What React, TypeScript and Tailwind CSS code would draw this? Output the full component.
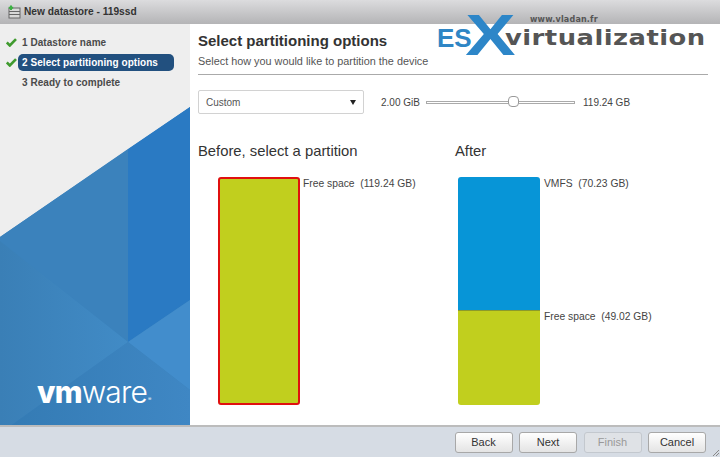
export default function App() {
  const Step = ({ n, label, checked, active }: { n: number; label: string; checked?: boolean; active?: boolean }) => (
    <div className="flex items-center h-5 pl-[6px]">
      <div className="w-[12px] shrink-0">
        {checked && (
          <svg width="11" height="9" viewBox="0 0 11 9"><path d="M0.8 4.5 L3.8 7.5 L10 1.2" fill="none" stroke="#3f9a2e" strokeWidth="2.6" /></svg>
        )}
      </div>
      <div className={`h-[17px] flex items-center rounded-[5px] w-[156px] pl-[4px] text-[10px] font-bold tracking-[0.05px] ${active ? "bg-[#22507f] text-white" : "text-[#4a4a4a]"}`}>
        {n} {label}
      </div>
    </div>
  );
  const Btn = ({ label, disabled }: { label: string; disabled?: boolean }) => (
    <button className={`w-[58px] h-[21px] rounded-[3px] border text-[11px] ${disabled ? "border-[#c3c8ce] bg-[#dfe2e6] text-[#999]" : "border-[#a8a8a8] bg-gradient-to-b from-white to-[#e4e4e4] text-[#333]"}`}>
      {label}
    </button>
  );
  return (
    <div className="relative w-[720px] h-[457px] overflow-hidden bg-white flex flex-col font-['Liberation_Sans',Arial,sans-serif]">
      <div className="h-6 shrink-0 flex items-center pl-2 gap-[2px] bg-gradient-to-b from-[#dcdcde] to-[#b4b4b6] text-[#333] text-[10.2px] font-bold">
        <svg width="14" height="14" viewBox="0 0 14 14">
          <rect x="1" y="3" width="11" height="10" fill="#d8d8d8" stroke="#666" />
          <path d="M1 6.5H12M1 9.5H12" stroke="#666" />
          <path d="M3 0.5V5M0.8 2.7H5.2" stroke="#3cb043" strokeWidth="2" />
        </svg>
        <span>New datastore - 119ssd</span>
      </div>
      <div className="flex flex-1 min-h-0">
        <aside className="relative w-[190px] shrink-0 bg-[#eeeeee] pt-[8px]">
          <Step n={1} label="Datastore name" checked />
          <Step n={2} label="Select partitioning options" checked active />
          <Step n={3} label="Ready to complete" />
          <svg className="absolute left-0 bottom-0" width="190" height="318" viewBox="0 107 190 318">
            <defs>
              <linearGradient id="a" x1="0" x2="1" y1="0" y2="0">
                <stop offset="0" stopColor="#3a7fb6" />
                <stop offset="1" stopColor="#418bc6" />
              </linearGradient>
              <linearGradient id="b" x1="0" x2="1" y1="0" y2="0">
                <stop offset="0" stopColor="#347bb4" />
                <stop offset="1" stopColor="#3f87c4" />
              </linearGradient>
            </defs>
            <polygon points="0,237 190,107 190,426 0,426" fill="#3a82bd" />
            <polygon points="0,241 128,342 128,149 0,237" fill="#3b82bc" />
            <polygon points="0,241 128,342 10,426 0,426" fill="url(#a)" />
            <polygon points="128,149 190,107 190,300 128,342" fill="#2a7ac3" />
            <polygon points="128,342 190,300 190,390" fill="#428dcc" />
            <polygon points="128,342 190,390 190,426 10,426" fill="url(#b)" />
          </svg>
          <div className="absolute left-[37px] top-[353px] text-white text-[30px] leading-none tracking-[-0.8px] font-['Inter',sans-serif]">
            <span className="font-extrabold">vm</span>
            <span className="font-light">ware</span>
            <sup className="text-[5px] ml-[1px]">®</sup>
          </div>
        </aside>
        <main className="flex-1 min-w-0 pl-2 pr-3 text-[#444]">
          <h1 className="mt-[8px] text-[15px] leading-[18px] font-bold text-[#333]">Select partitioning options</h1>
          <p className="mt-[4px] text-[10.85px] leading-[14px] text-[#555]">Select how you would like to partition the device</p>
          <div className="mt-[6px] h-px bg-[#aaaaaa]" />
          <div className="mt-[15px] flex items-center h-[24px] text-[10px]">
            <div className="w-[166px] h-[24px] border border-[#d2d2d2] rounded-[2px] flex items-center justify-between pl-[7px] pr-[7px] text-[#555]">
              <span>Custom</span>
              <span className="w-0 h-0 border-x-[3.5px] border-x-transparent border-t-[5px] border-t-[#222]" />
            </div>
            <span className="ml-[17px] w-[45px] text-[#444]">2.00 GiB</span>
            <div className="relative w-[149px] h-[3px] border border-[#aaa] bg-white">
              <div className="absolute left-[81px] top-[-6px] w-[11px] h-[11px] rounded-[4px] border border-[#999] bg-white" />
            </div>
            <span className="ml-2 text-[#444]">119.24 GB</span>
          </div>
          <div className="mt-[27px] flex">
            <div className="w-[257px]">
              <h2 className="text-[14.8px] leading-[20px] text-[#333]">Before, select a partition</h2>
              <div className="mt-[16px] ml-[20px] flex items-start">
                <div className="w-[82px] h-[228px] rounded-[3px] border-2 border-[#e0100f] bg-[#c1cf1e]" />
                <span className="ml-[3px] text-[10.3px] leading-[14px] whitespace-pre text-[#444]">Free space  (119.24 GB)</span>
              </div>
            </div>
            <div>
              <h2 className="text-[14.8px] leading-[20px] text-[#333]">After</h2>
              <div className="mt-[16px] ml-[3px] flex items-start">
                <div className="w-[82px] h-[228px] flex flex-col rounded-[3px] overflow-hidden">
                  <div className="h-[133px] bg-[#0795d7]" />
                  <div className="flex-1 border-t border-[#8c9a2a] bg-[#c1cf1e]" />
                </div>
                <div className="ml-[4px] flex flex-col text-[10.3px] leading-[14px] text-[#444] whitespace-pre">
                  <span>VMFS  (70.23 GB)</span>
                  <span className="mt-[119px]">Free space  (49.02 GB)</span>
                </div>
              </div>
            </div>
          </div>
        </main>
      </div>
      <footer className="relative h-[32px] shrink-0 flex items-center justify-end gap-[6.5px] pr-[14px] bg-[#d6dce4] border-t-2 border-[#bcbcbc]">
        <Btn label="Back" />
        <Btn label="Next" />
        <Btn label="Finish" disabled />
        <Btn label="Cancel" />
        <svg className="absolute right-[1px] bottom-[1px]" width="7" height="7" viewBox="0 0 7 7">
          <path d="M1 7L7 1M4 7L7 4" stroke="#888" strokeWidth="1" />
        </svg>
      </footer>
      <div className="absolute left-[437px] top-[14px] w-[275px] h-[44px]">
        <span className="absolute left-0 top-[11px] text-[26px] leading-[26px] font-bold text-[#2f86c5]">ES</span>
        <span className="absolute left-[34px] top-[-8px] text-[58px] leading-[58px] font-bold text-[#2d86c8] scale-x-[1.3]">X</span>
        <span className="absolute left-[93px] top-0 text-[8px] leading-[12px] font-bold text-[#555] tracking-[0.2px] font-['DejaVu_Sans',sans-serif]">www.vladan.fr</span>
        <span className="absolute left-[68px] top-[11px] origin-left scale-x-[1.2] text-[21.5px] leading-[26px] font-bold text-[#555] tracking-[0.4px] font-['DejaVu_Sans',sans-serif]">virtualization</span>
      </div>
    </div>
  );
}
